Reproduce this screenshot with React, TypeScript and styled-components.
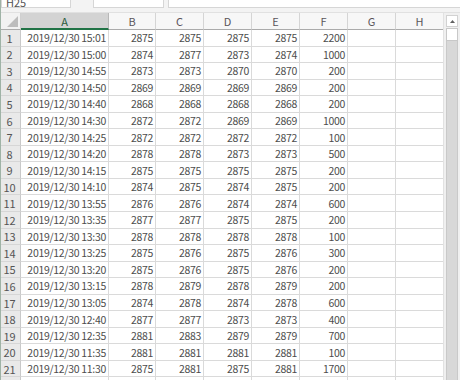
import styled, { createGlobalStyle } from 'styled-components'

const GlobalStyle = createGlobalStyle`
	html, body {
		margin: 0;
		padding: 0;
		background: #ffffff;
		overflow: hidden;
	}
	body {
		font-family: "Noto Sans CJK JP", "Noto Sans", sans-serif;
	}
`

const rows: [string, number, number, number, number, number][] = [
	['15:01', 2875, 2875, 2875, 2875, 2200],
	['15:00', 2874, 2877, 2873, 2874, 1000],
	['14:55', 2873, 2873, 2870, 2870, 200],
	['14:50', 2869, 2869, 2869, 2869, 200],
	['14:40', 2868, 2868, 2868, 2868, 200],
	['14:30', 2872, 2872, 2869, 2869, 1000],
	['14:25', 2872, 2872, 2872, 2872, 100],
	['14:20', 2878, 2878, 2873, 2873, 500],
	['14:15', 2875, 2875, 2875, 2875, 200],
	['14:10', 2874, 2875, 2874, 2875, 200],
	['13:55', 2876, 2876, 2874, 2874, 600],
	['13:35', 2877, 2877, 2875, 2875, 200],
	['13:30', 2878, 2878, 2878, 2878, 100],
	['13:25', 2875, 2876, 2875, 2876, 300],
	['13:20', 2875, 2876, 2875, 2876, 200],
	['13:15', 2878, 2879, 2878, 2879, 200],
	['13:05', 2874, 2878, 2874, 2878, 600],
	['12:40', 2877, 2877, 2873, 2873, 400],
	['12:35', 2881, 2883, 2879, 2879, 700],
	['11:35', 2881, 2881, 2881, 2881, 100],
	['11:30', 2875, 2881, 2875, 2881, 1700],
]

const columns = ['A', 'B', 'C', 'D', 'E', 'F', 'G', 'H']

const Window = styled.div`
	width: 460px;
	height: 380px;
	overflow: hidden;
	display: flex;
	flex-direction: column;
	background: #ffffff;
	border-left: 1px solid #9fb3a6;
	box-sizing: border-box;
`

const FormulaBar = styled.div`
	height: 13px;
	flex: none;
	display: flex;
	background: #f3f3f3;
	border-bottom: 1px solid #e1e1e1;
	box-sizing: border-box;
`

const Field = styled.div<{ $width: number; $gap: number }>`
	width: ${p => p.$width}px;
	margin-left: ${p => p.$gap}px;
	height: 8px;
	background: #ffffff;
	border: 1px solid #d6d6d6;
	border-top: none;
	box-sizing: border-box;
	overflow: hidden;
	display: flex;
	align-items: flex-end;
	padding-left: 4px;
	font-size: 11px;
	color: #555;
	flex: none;
`

const FieldText = styled.span`
	line-height: 12px;
	margin-bottom: -1px;
`

const Main = styled.div`
	flex: 1;
	display: flex;
	min-height: 0;
`

const Sheet = styled.div`
	width: 443px;
	display: grid;
	grid-template-columns: 20px 88px 47px repeat(6, 48px);
	grid-template-rows: 17px;
	grid-auto-rows: 16.55px;
	align-content: start;
	overflow: hidden;
	font-size: 10.5px;
	color: #4d4d4d;
`

const Corner = styled.div`
	background: #f2f2f2;
	border-right: 1px solid #d0d0d0;
	border-bottom: 1px solid #ababab;
	display: flex;
	align-items: flex-end;
	justify-content: flex-end;
	padding: 0 2px 2px 0;
	box-sizing: border-box;
`

const ColHead = styled.div<{ $active?: boolean }>`
	background: ${p => (p.$active ? '#d3d3d3' : '#f7f7f7')};
	border-right: 1px solid ${p => (p.$active ? '#b8b8b8' : '#d5d5d5')};
	border-bottom: ${p => (p.$active ? '2px solid #217346' : '1px solid #ababab')};
	color: ${p => (p.$active ? '#2a5a3c' : '#5a545a')};
	font-size: 11px;
	display: flex;
	align-items: center;
	justify-content: center;
	box-sizing: border-box;
	line-height: 1;
	padding-top: 1px;
`

const RowHead = styled.div`
	background: #e9e9e9;
	border-right: 1px solid #c9c9c9;
	border-bottom: 1px solid #d6d6d6;
	color: #555;
	font-size: 11px;
	display: flex;
	align-items: center;
	justify-content: center;
	padding-right: 2px;
	box-sizing: border-box;
	overflow: hidden;
`

const Cell = styled.div`
	border-right: 1px solid #dadada;
	border-bottom: 1px solid #dadada;
	display: flex;
	align-items: center;
	justify-content: flex-end;
	padding-right: 2px;
	box-sizing: border-box;
	white-space: nowrap;
	overflow: hidden;
	letter-spacing: -0.3px;
`

const VScroll = styled.div`
	width: 17px;
	flex: none;
	display: flex;
	flex-direction: column;
	padding: 2px 2px 0 2px;
	border-left: 1px solid #e2e2e2;
	box-sizing: border-box;
	background: #f0f0f0;
`

const ScrollButton = styled.div`
	height: 10px;
	background: #ffffff;
	border: 1px solid #d2d2d2;
	display: flex;
	align-items: center;
	justify-content: center;
`

const Thumb = styled.div`
	height: 11px;
	margin-top: 1px;
	background: #ffffff;
	border: 1px solid #c8c8c8;
`

const Track = styled.div`
	flex: 1;
	background: #d8d8d8;
	border-left: 1px solid #c9c9c9;
	border-right: 1px solid #c9c9c9;
`

const Row = ({ index, data }: { index: number; data: (typeof rows)[number] }) => (
	<>
		<RowHead>{index}</RowHead>
		<Cell>2019/12/30 {data[0]}</Cell>
		<Cell>{data[1]}</Cell>
		<Cell>{data[2]}</Cell>
		<Cell>{data[3]}</Cell>
		<Cell>{data[4]}</Cell>
		<Cell>{data[5]}</Cell>
		<Cell />
		<Cell />
	</>
)

// the next row is only a sliver at the bottom edge, so its cells stay empty
const FillerRow = () => (
	<>
		<RowHead />
		{columns.map(c => <Cell key={c} />)}
	</>
)

const App = () => (
	<>
		<GlobalStyle />
		<Window>
			<FormulaBar>
				<Field $width={70} $gap={0}><FieldText>H25</FieldText></Field>
				<Field $width={71} $gap={22}><FieldText /></Field>
				<Field $width={293} $gap={4}><FieldText /></Field>
			</FormulaBar>
			<Main>
				<Sheet>
					<Corner>
						<svg width="11" height="11" viewBox="0 0 11 11">
							<polygon points="11,0 11,11 0,11" fill="#bdbdbd" />
						</svg>
					</Corner>
					{columns.map(c => (
						<ColHead key={c} $active={c === 'A'}>{c}</ColHead>
					))}
					{rows.map((r, i) => (
						<Row key={i} index={i + 1} data={r} />
					))}
					<FillerRow />
				</Sheet>
				<VScroll>
					<ScrollButton>
						<svg width="5" height="3" viewBox="0 0 5 3">
							<polygon points="2.5,0 5,3 0,3" fill="#606060" />
						</svg>
					</ScrollButton>
					<Thumb />
					<Track />
				</VScroll>
			</Main>
		</Window>
	</>
)

export default App
